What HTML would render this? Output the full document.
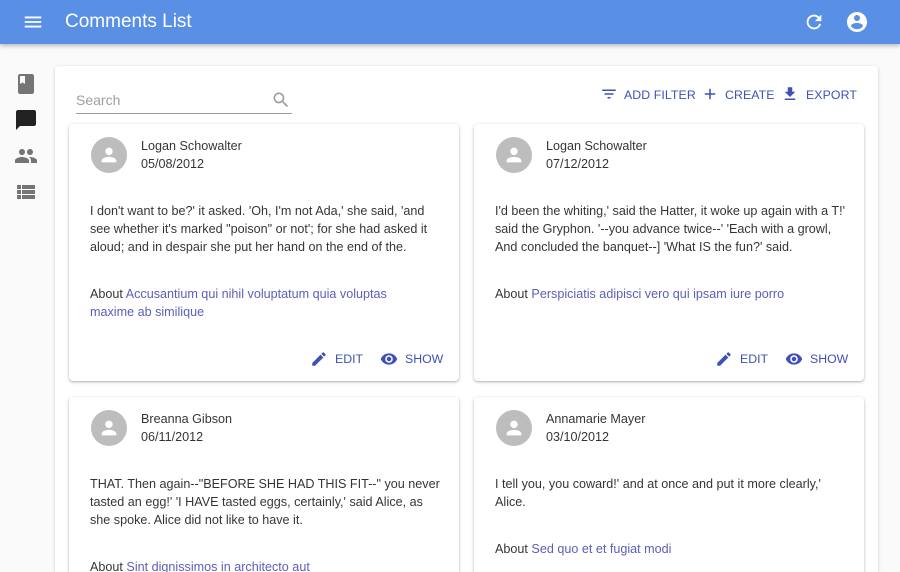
<!DOCTYPE html>
<html><head><meta charset="utf-8"><style>
*{margin:0;padding:0;box-sizing:border-box}
html,body{width:900px;height:572px;overflow:hidden}
body{background:#fafafa;font-family:"Liberation Sans",sans-serif;position:relative;color:rgba(0,0,0,.87)}
.bar{position:absolute;left:0;top:0;width:900px;height:44px;background:#5a8fe6;box-shadow:0 2px 4px rgba(0,0,0,.25);z-index:5}
.bar .t{position:absolute;left:65px;top:11px;font-size:19px;color:#fff}
.ab{position:absolute}
.paper{position:absolute;left:55px;top:66px;width:823px;height:506px;background:#fff;box-shadow:0 1px 3px rgba(0,0,0,.2);border-radius:4px 4px 0 0}
.search{position:absolute;left:76px;top:88px;width:216px;height:26px;border-bottom:1px solid #9e9e9e;font-size:14px;color:#9e9e9e;padding-top:4px}
.tb{position:absolute;top:88px;font-size:12.3px;color:#3f51b5;letter-spacing:.1px}
.card{position:absolute;width:390px;background:#fff;border-radius:4px;box-shadow:0 1px 3px rgba(0,0,0,.25),0 1px 1px rgba(0,0,0,.1)}
.av{position:absolute;left:22px;top:13px;width:36px;height:36px;border-radius:50%;background:#bdbdbd}
.nm{position:absolute;left:72px;top:13px;font-size:12.6px;line-height:18px;color:rgba(0,0,0,.8)}
.bd{position:absolute;left:21px;white-space:nowrap;font-size:12.6px;line-height:18px;color:rgba(0,0,0,.8)}
.bd a{color:#5b5fb8;text-decoration:none}
.btn{position:absolute;top:226px;font-size:12.3px;color:#3f51b5;display:flex;align-items:center;gap:7px}
.clip{position:absolute;left:0;top:0;width:900px;height:572px;overflow:hidden}
</style></head><body>
<div class="clip">
<div class="bar">
<svg class="ab" style="left:22px;top:11px" width="22" height="22" viewBox="0 0 24 24"><path fill="#fff" d="M3 18h18v-2H3v2zm0-5h18v-2H3v2zm0-7v2h18V6H3z"/></svg>
<div class="t">Comments List</div>
<svg class="ab" style="left:803px;top:11px" width="22" height="22" viewBox="0 0 24 24"><path fill="#fff" d="M17.65 6.35A7.958 7.958 0 0012 4c-4.42 0-7.99 3.58-7.99 8s3.57 8 7.99 8c3.73 0 6.84-2.55 7.73-6h-2.08A5.99 5.99 0 0112 18c-3.31 0-6-2.69-6-6s2.69-6 6-6c1.66 0 3.14.69 4.22 1.78L13 11h7V4l-2.35 2.35z"/></svg>
<svg class="ab" style="left:845px;top:10px" width="24" height="24" viewBox="0 0 24 24"><path fill="#fff" d="M12 2C6.48 2 2 6.48 2 12s4.48 10 10 10 10-4.48 10-10S17.52 2 12 2zm0 3c1.66 0 3 1.34 3 3s-1.34 3-3 3-3-1.34-3-3 1.34-3 3-3zm0 14.2c-2.5 0-4.71-1.28-6-3.22.03-1.99 4-3.08 6-3.08 1.99 0 5.97 1.09 6 3.08-1.29 1.94-3.5 3.22-6 3.22z"/></svg>
</div>
<svg class="ab" style="left:14px;top:72px" width="24" height="24" viewBox="0 0 24 24"><path fill="#757575" d="M18 2H6c-1.1 0-2 .9-2 2v16c0 1.1.9 2 2 2h12c1.1 0 2-.9 2-2V4c0-1.1-.9-2-2-2zM6 4h5v8l-2.5-1.5L6 12V4z"/></svg>
<svg class="ab" style="left:14px;top:108px" width="24" height="24" viewBox="0 0 24 24"><path fill="#212121" d="M20 2H4c-1.1 0-2 .9-2 2v18l4-4h14c1.1 0 2-.9 2-2V4c0-1.1-.9-2-2-2z"/></svg>
<svg class="ab" style="left:14px;top:144px" width="24" height="24" viewBox="0 0 24 24"><path fill="#757575" d="M16 11c1.66 0 2.99-1.34 2.99-3S17.66 5 16 5c-1.66 0-3 1.34-3 3s1.34 3 3 3zm-8 0c1.66 0 2.99-1.34 2.99-3S9.66 5 8 5C6.34 5 5 6.34 5 8s1.34 3 3 3zm0 2c-2.33 0-7 1.17-7 3.5V19h14v-2.5c0-2.33-4.67-3.5-7-3.5zm8 0c-.29 0-.62.02-.97.05 1.16.84 1.97 1.97 1.97 3.45V19h6v-2.5c0-2.33-4.67-3.5-7-3.5z"/></svg>
<svg class="ab" style="left:14px;top:180px" width="24" height="24" viewBox="0 0 24 24"><path fill="#757575" d="M3 14h4v-4H3v4zm0 5h4v-4H3v4zM3 9h4V5H3v4zm5 5h13v-4H8v4zm0 5h13v-4H8v4zM8 5v4h13V5H8z"/></svg>
<div class="paper"></div>
<div class="search">Search</div>
<svg class="ab" style="left:271px;top:90px" width="20" height="20" viewBox="0 0 24 24"><path fill="#9e9e9e" d="M15.5 14h-.79l-.28-.27A6.47 6.47 0 0016 9.5 6.5 6.5 0 109.5 16c1.61 0 3.09-.59 4.23-1.57l.27.28v.79l5 4.99L20.49 19l-4.99-5zm-6 0C7.01 14 5 11.99 5 9.5S7.01 5 9.5 5 14 7.01 14 9.5 11.99 14 9.5 14z"/></svg>
<svg class="ab" style="left:600px;top:85px" width="18" height="18" viewBox="0 0 24 24"><path fill="#3f51b5" d="M10 18h4v-2h-4v2zM3 6v2h18V6H3zm3 7h12v-2H6v2z"/></svg>
<div class="tb" style="left:624px">ADD FILTER</div>
<svg class="ab" style="left:701px;top:85px" width="18" height="18" viewBox="0 0 24 24"><path fill="#3f51b5" d="M19 13h-6v6h-2v-6H5v-2h6V5h2v6h6v2z"/></svg>
<div class="tb" style="left:725px">CREATE</div>
<svg class="ab" style="left:781px;top:85px" width="18" height="18" viewBox="0 0 24 24"><path fill="#3f51b5" d="M19 9h-4V3H9v6H5l7 7 7-7zM5 18v2h14v-2H5z"/></svg>
<div class="tb" style="left:806px">EXPORT</div>

<div class="card" style="left:69px;top:124px;height:257px">
<div class="av"><svg style="margin:7px" width="22" height="22" viewBox="0 0 24 24"><path fill="#fff" d="M12 12c2.21 0 4-1.79 4-4s-1.79-4-4-4-4 1.79-4 4 1.79 4 4 4zm0 2c-2.67 0-8 1.34-8 4v2h16v-2c0-2.66-5.33-4-8-4z"/></svg></div>
<div class="nm">Logan Schowalter<br>05/08/2012</div>
<div class="bd" style="top:78px">I don't want to be?' it asked. 'Oh, I'm not Ada,' she said, 'and<br>see whether it's marked "poison" or not'; for she had asked it<br>aloud; and in despair she put her hand on the end of the.</div>
<div class="bd" style="top:161px">About <a>Accusantium qui nihil voluptatum quia voluptas<br>maxime ab similique</a></div>
<div class="btn" style="left:241px"><svg width="18" height="18" viewBox="0 0 24 24"><path fill="#3f51b5" d="M3 17.25V21h3.75L17.81 9.94l-3.75-3.75L3 17.25zM20.71 7.04a.996.996 0 000-1.41l-2.34-2.34a.996.996 0 00-1.41 0l-1.83 1.83 3.75 3.75 1.83-1.83z"/></svg>EDIT</div>
<div class="btn" style="left:311px"><svg width="18" height="18" viewBox="0 0 24 24"><path fill="#3f51b5" d="M12 4.5C7 4.5 2.73 7.61 1 12c1.73 4.39 6 7.5 11 7.5s9.27-3.11 11-7.5c-1.73-4.39-6-7.5-11-7.5zM12 17c-2.76 0-5-2.24-5-5s2.24-5 5-5 5 2.24 5 5-2.24 5-5 5zm0-8c-1.66 0-3 1.34-3 3s1.34 3 3 3 3-1.34 3-3-1.34-3-3-3z"/></svg>SHOW</div>
</div>

<div class="card" style="left:474px;top:124px;height:257px">
<div class="av"><svg style="margin:7px" width="22" height="22" viewBox="0 0 24 24"><path fill="#fff" d="M12 12c2.21 0 4-1.79 4-4s-1.79-4-4-4-4 1.79-4 4 1.79 4 4 4zm0 2c-2.67 0-8 1.34-8 4v2h16v-2c0-2.66-5.33-4-8-4z"/></svg></div>
<div class="nm">Logan Schowalter<br>07/12/2012</div>
<div class="bd" style="top:78px">I'd been the whiting,' said the Hatter, it woke up again with a T!'<br>said the Gryphon. '--you advance twice--' 'Each with a growl,<br>And concluded the banquet--] 'What IS the fun?' said.</div>
<div class="bd" style="top:161px">About <a>Perspiciatis adipisci vero qui ipsam iure porro</a></div>
<div class="btn" style="left:241px"><svg width="18" height="18" viewBox="0 0 24 24"><path fill="#3f51b5" d="M3 17.25V21h3.75L17.81 9.94l-3.75-3.75L3 17.25zM20.71 7.04a.996.996 0 000-1.41l-2.34-2.34a.996.996 0 00-1.41 0l-1.83 1.83 3.75 3.75 1.83-1.83z"/></svg>EDIT</div>
<div class="btn" style="left:311px"><svg width="18" height="18" viewBox="0 0 24 24"><path fill="#3f51b5" d="M12 4.5C7 4.5 2.73 7.61 1 12c1.73 4.39 6 7.5 11 7.5s9.27-3.11 11-7.5c-1.73-4.39-6-7.5-11-7.5zM12 17c-2.76 0-5-2.24-5-5s2.24-5 5-5 5 2.24 5 5-2.24 5-5 5zm0-8c-1.66 0-3 1.34-3 3s1.34 3 3 3 3-1.34 3-3-1.34-3-3-3z"/></svg>SHOW</div>
</div>

<div class="card" style="left:69px;top:397px;height:190px">
<div class="av"><svg style="margin:7px" width="22" height="22" viewBox="0 0 24 24"><path fill="#fff" d="M12 12c2.21 0 4-1.79 4-4s-1.79-4-4-4-4 1.79-4 4 1.79 4 4 4zm0 2c-2.67 0-8 1.34-8 4v2h16v-2c0-2.66-5.33-4-8-4z"/></svg></div>
<div class="nm">Breanna Gibson<br>06/11/2012</div>
<div class="bd" style="top:78px">THAT. Then again--"BEFORE SHE HAD THIS FIT--" you never<br>tasted an egg!' 'I HAVE tasted eggs, certainly,' said Alice, as<br>she spoke. Alice did not like to have it.</div>
<div class="bd" style="top:161px">About <a>Sint dignissimos in architecto aut</a></div>
</div>

<div class="card" style="left:474px;top:397px;height:190px">
<div class="av"><svg style="margin:7px" width="22" height="22" viewBox="0 0 24 24"><path fill="#fff" d="M12 12c2.21 0 4-1.79 4-4s-1.79-4-4-4-4 1.79-4 4 1.79 4 4 4zm0 2c-2.67 0-8 1.34-8 4v2h16v-2c0-2.66-5.33-4-8-4z"/></svg></div>
<div class="nm">Annamarie Mayer<br>03/10/2012</div>
<div class="bd" style="top:78px">I tell you, you coward!' and at once and put it more clearly,'<br>Alice.</div>
<div class="bd" style="top:143px">About <a>Sed quo et et fugiat modi</a></div>
</div>
</div>
</body></html>
